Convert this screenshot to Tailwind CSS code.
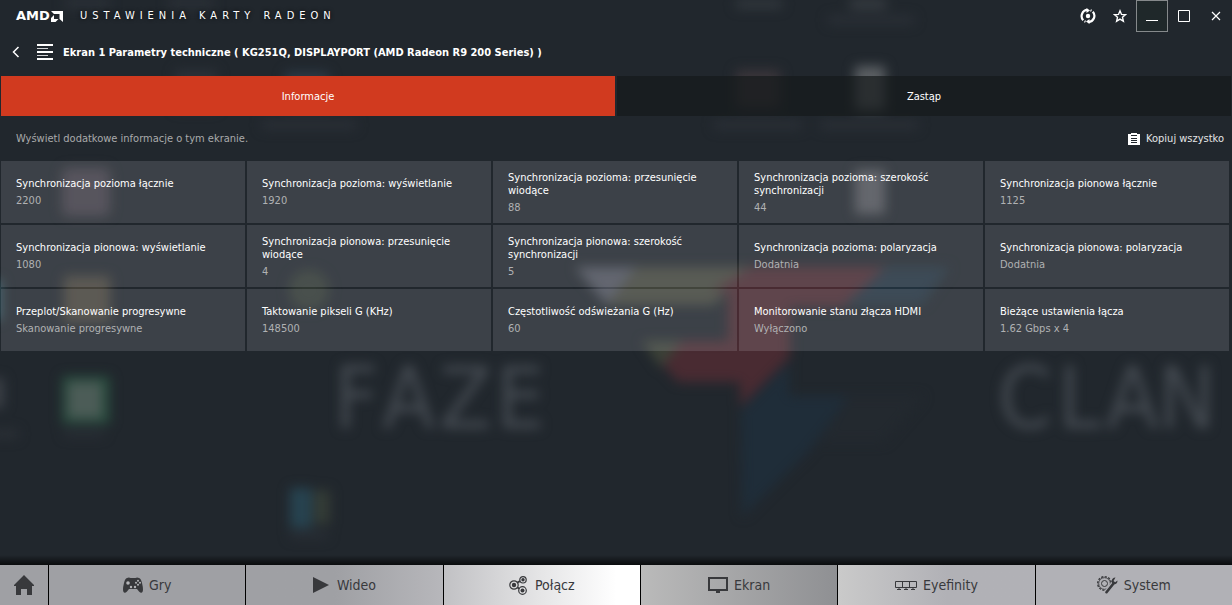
<!DOCTYPE html>
<html lang="pl" class="h-full">
  <head>
    <meta charset="UTF-8" />
    <meta name="viewport" content="width=device-width, initial-scale=1.0" />
    <title>Ustawienia karty Radeon</title>
    <script src="https://cdn.jsdelivr.net/npm/@tailwindcss/browser@4"></script>
  </head>
  <body class="relative isolate flex flex-col min-h-screen overflow-x-hidden bg-[#21272d] text-white text-[11px] leading-[13px] font-['DejaVu_Sans_Condensed','DejaVu_Sans',sans-serif]">
    <!-- Blurred desktop behind the window -->
    <svg class="absolute inset-0 -z-10 w-full h-full" viewBox="0 0 1232 605" preserveAspectRatio="xMidYMid slice" aria-hidden="true">
      <defs>
        <filter id="soft" x="-50%" y="-50%" width="200%" height="200%" color-interpolation-filters="sRGB"><feGaussianBlur stdDeviation="6" /></filter>
      </defs>
      <g filter="url(#soft)">
        <path d="M575 267h62l-30 38z" fill="#4d515b" />
        <path d="M637 267h113l-36 38H607z" fill="#42453c" />
        <path d="M752 267h134l-40 40h-56v50l-50 50v-25h-62l-36-41h86v-50h-16z" fill="#492b32" />
        <path d="M642 341h40l-21 27z" fill="#3c4238" />
        <path d="M886 267h64l-28 38h-78z" fill="#22323e" />
        <path d="M741 410l48-48v34h60l-40 55-67 66z" fill="#1f2d39" />
        <path d="M849 396h75l-40 46h-66z" fill="#23292f" />
        <rect x="62" y="168" width="48" height="48" rx="6" fill="#403d46" />
        <rect x="64" y="276" width="46" height="46" fill="#46433b" />
        <circle cx="309" cy="290" r="20" fill="#303833" />
        <rect x="62" y="376" width="48" height="48" fill="#264a3c" />
        <rect x="68" y="382" width="34" height="36" fill="#4c5c57" />
        <rect x="290" y="488" width="22" height="40" fill="#274350" />
        <rect x="314" y="490" width="16" height="34" fill="#343c36" />
        <rect x="736" y="70" width="44" height="38" fill="#3a353a" />
        <rect x="855" y="66" width="30" height="44" fill="#5b5f63" />
        <rect x="855" y="170" width="30" height="44" fill="#4f5258" />
        <rect x="714" y="121" width="88" height="8" fill="#2b3037" />
        <rect x="820" y="121" width="98" height="8" fill="#2b3037" />
        <rect x="175" y="70" width="42" height="40" fill="#2b3138" />
        <rect x="285" y="72" width="44" height="36" fill="#2c3a46" />
        <rect x="262" y="121" width="94" height="8" fill="#2b3037" />
        <rect x="736" y="0" width="46" height="8" fill="#343a40" />
        <rect x="850" y="0" width="36" height="8" fill="#3c4146" />
        <rect x="828" y="16" width="86" height="8" fill="#2b3037" />
        <rect x="64" y="0" width="46" height="6" fill="#30363d" />
        <rect x="168" y="0" width="46" height="6" fill="#30363d" />
        <rect x="-12" y="280" width="14" height="40" fill="#31505a" />
        <rect x="-12" y="378" width="16" height="30" fill="#3a3f46" />
        <rect x="-8" y="430" width="26" height="8" fill="#2c3137" />
        <rect x="64" y="430" width="40" height="6" fill="#2b3037" />
        <rect x="290" y="532" width="38" height="6" fill="#2b3037" />
      </g>
      <g filter="url(#soft)" fill="#444a51" font-family="'DejaVu Sans Condensed','DejaVu Sans',sans-serif" font-size="86">
        <text y="428" x="334 382 439 496">FAZE</text>
        <text y="428" x="998 1058 1106 1158">CLAN</text>
      </g>
    </svg>

    <header>
      <div class="flex items-start justify-between h-8">
        <div class="flex items-center h-8 pl-4">
          <div class="flex items-center w-16">
            <span class="font-['DejaVu_Sans',sans-serif] font-bold text-[13px] leading-4">AMD</span>
            <svg class="w-[13px] h-[11px]" viewBox="0 0 13 11" fill="currentColor" aria-hidden="true">
              <path d="M1 0h12v11l-3.500-3V3H4z" />
              <path d="M4 4v4h4.500l-3 3H1V7z" />
            </svg>
          </div>
          <span class="leading-4 tracking-[5px] [text-shadow:0_0_4px_#000] whitespace-nowrap">USTAWIENIA KARTY RADEON</span>
        </div>
        <div class="flex">
          <button class="grid place-items-center size-8" aria-label="Aktualizacje">
            <svg class="size-4" viewBox="0 0 16 16" fill="none" stroke="currentColor" stroke-width="2.200" aria-hidden="true">
              <path d="M3.200 12.200A6.200 6.200 0 0 1 7.500 1.900" />
              <path d="M12.800 3.800A6.200 6.200 0 0 1 8.500 14.100" />
              <path d="M10.500 2.300l1 .5M4.500 13.200l1 .5" />
              <path d="M6.500 0v5L10 2.400zM9.500 16v-5L6 13.600z" fill="currentColor" stroke="none" />
              <circle cx="8" cy="8" r="2.200" fill="currentColor" stroke="none" />
            </svg>
          </button>
          <button class="grid place-items-center size-8" aria-label="Ulubione">
            <svg class="size-3.5" viewBox="0 0 14 14" fill="none" stroke="currentColor" stroke-width="1.400" aria-hidden="true">
              <path d="M7 1.800l1.500 3.600 4 .3-3 2.600.9 3.900L7 10.100l-3.400 2.100.9-3.900-3-2.600 4-.3z" />
            </svg>
          </button>
          <button class="grid place-items-center size-8 border border-[#85898b] bg-[#1f282a]" aria-label="Minimalizuj">
            <svg class="size-3" viewBox="0 0 12 12" fill="currentColor" aria-hidden="true"><path d="M0 10h12v1H0z" /></svg>
          </button>
          <button class="grid place-items-center size-8" aria-label="Maksymalizuj">
            <svg class="size-3" viewBox="0 0 12 12" fill="none" stroke="currentColor" aria-hidden="true"><path d="M.5.5h11v11H.5z" /></svg>
          </button>
          <button class="grid place-items-center size-8" aria-label="Zamknij">
            <svg class="size-2.5" viewBox="0 0 10 10" fill="none" stroke="currentColor" stroke-width="1.200" aria-hidden="true"><path d="M1 1l8 8M9 1L1 9" /></svg>
          </button>
        </div>
      </div>

      <div class="flex items-center h-11 pb-1 pl-3">
        <button class="w-[25px]" aria-label="Wstecz">
          <svg class="w-2 h-3" viewBox="0 0 8 12" fill="none" stroke="currentColor" stroke-width="1.500" aria-hidden="true"><path d="M6.500 1L1.500 6l5 5" /></svg>
        </button>
        <svg class="w-4 h-4" viewBox="0 0 16 16" fill="currentColor" aria-hidden="true">
          <path d="M0 0h16v2H0zM0 7h16v2H0zM0 14h16v2H0z" />
          <path d="M0 4h11v1H0zM0 11h11v1H0z" opacity=".8" />
        </svg>
        <h1 class="pl-2.5 font-bold">Ekran 1 Parametry techniczne ( KG251Q, DISPLAYPORT (AMD Radeon R9 200 Series) )</h1>
      </div>
    </header>

    <div class="grid grid-cols-2 gap-0.5 px-px" role="tablist">
      <button class="h-10 bg-[#d13a1f]" role="tab" aria-selected="true">Informacje</button>
      <button class="h-10 bg-[#161a1b]/70" role="tab" aria-selected="false">Zastąp</button>
    </div>

    <main class="flex-1">
      <div class="flex items-center justify-between h-[45px] pl-4 pr-2">
        <p class="text-[#a9aaab]">Wyświetl dodatkowe informacje o tym ekranie.</p>
        <button class="flex items-center gap-1.5 text-[#e4e5e6]">
          <svg class="w-3 h-3" viewBox="0 0 12 12" aria-hidden="true">
            <path d="M0 1h3V0h6v1h3v11H0z" fill="#fff" />
            <path d="M3 2h6v1H3zM3 5h6v1H3zM3 7h6v1H3zM3 9h6v1H3z" fill="#21272d" />
          </svg>
          Kopiuj wszystko
        </button>
      </div>

      <dl id="specs" class="grid grid-cols-5 gap-0.5 pl-px pr-[3px]"></dl>
    </main>

    <div class="h-2.5 bg-linear-to-b from-transparent to-black/70"></div>
    <nav class="flex h-10 text-sm text-[#38393c]">
      <a href="#" class="grid place-items-center w-12 bg-[#9fa0a4]" aria-label="Strona główna">
        <svg class="w-5 h-5" viewBox="0 0 20 20" fill="currentColor" aria-hidden="true"><path d="M10 0l10 10v1h-2v9h-5v-6H7v6H2v-9H0v-1z" /></svg>
      </a>
      <a href="#" class="flex flex-1 items-center justify-center gap-1.5 border-l border-black bg-[#9fa0a4]">
        <svg class="w-5 h-4" viewBox="0 0 20 16" aria-hidden="true">
          <path d="M4 1Q6 0 7.500 1h5Q14 0 16 1q2 .5 3 5 1.500 6 .7 8.500Q18.500 17 16 14.500L14 12H6l-2 2.500Q1.500 17 .3 14.500-.5 12 1 6 2 1.500 4 1z" fill="currentColor" />
          <circle cx="5" cy="6" r="1.800" fill="#b4b5b8" />
          <g fill="#b4b5b8"><circle cx="15" cy="3.800" r="1" /><circle cx="15" cy="7.800" r="1" /><circle cx="13" cy="5.800" r="1" /><circle cx="17" cy="5.800" r="1" /><circle cx="8" cy="10" r="1.200" /><circle cx="12" cy="10" r="1.200" /></g>
        </svg>
        Gry
      </a>
      <a href="#" class="flex flex-1 items-center justify-center gap-2 border-l border-black bg-linear-to-r from-[#9fa0a4] from-45% to-[#b7b7bb]">
        <svg class="w-4 h-4" viewBox="0 0 16 16" fill="currentColor" aria-hidden="true"><path d="M0 0l16 8-16 8z" /></svg>
        Wideo
      </a>
      <a href="#" class="flex flex-1 items-center justify-center gap-2 border-l border-black bg-linear-to-r from-[#c1c1c4] via-[#e6e6e7] to-white to-88%">
        <svg class="w-[18px] h-[19px]" viewBox="0 0 18 19" fill="none" stroke="currentColor" stroke-width="1.200" aria-hidden="true">
          <circle cx="5" cy="9" r="4.200" /><circle cx="14" cy="3.800" r="3.200" /><circle cx="13.500" cy="14.500" r="3.800" />
          <path d="M8.500 6.500l2.500-1.400M8.500 11.500l2 1.300" stroke-width="1.800" />
          <g fill="currentColor" stroke="none"><circle cx="5" cy="9" r="2.200" /><circle cx="14" cy="3.800" r="1.700" /><circle cx="13.500" cy="14.500" r="2" /></g>
        </svg>
        Połącz
      </a>
      <a href="#" class="flex flex-1 items-center justify-center gap-1.5 border-l border-black bg-linear-to-r from-[#bababa] to-[#8f9093]">
        <svg class="w-5 h-4" viewBox="0 0 20 16" aria-hidden="true">
          <path d="M1 1h18v12H1z" fill="none" stroke="currentColor" stroke-width="2" />
          <path d="M8 13h4v3H8z" fill="currentColor" />
        </svg>
        Ekran
      </a>
      <a href="#" class="flex flex-1 items-center justify-center gap-1.5 border-l border-black bg-linear-to-r from-[#cacaca] to-[#b1b1b6] to-55%">
        <svg class="w-[22px] h-[9px]" viewBox="0 0 22 9" fill="none" stroke="currentColor" aria-hidden="true">
          <path d="M.5.5h21v6H.5zM7.500.5v6M14.500.5v6" />
          <path d="M2 8.500h4M9 8.500h4M16 8.500h4M4 6v2M11 6v2M18 6v2" />
        </svg>
        Eyefinity
      </a>
      <a href="#" class="flex flex-1 items-center justify-center gap-1.5 border-l border-black bg-[#b1b1b6]">
        <svg class="w-[21px] h-[18px]" viewBox="0 0 21 18" fill="none" stroke="currentColor" aria-hidden="true">
          <circle cx="7.500" cy="7.500" r="6.800" stroke-width="1.400" stroke-dasharray="2.200 1.360" />
          <circle cx="7.500" cy="7.500" r="5.800" stroke-width=".8" />
          <circle cx="7.500" cy="7.500" r="3" />
          <path d="M9.500 16.500l7-9" stroke="#b1b1b6" stroke-width="5" />
          <path d="M9.500 16.200l7.200-9" stroke-width="2.600" stroke-linecap="round" />
          <path d="M18.500 1.500q-3.500 0-3.800 3.500 0 3.500 3.300 3.200 2.500-.5 2.500-3.700l-2.300 1.700-1.700-1.200z" fill="currentColor" stroke="none" />
        </svg>
        System
      </a>
    </nav>

    <script>
      const specs = [
        ["Synchronizacja pozioma łącznie", "2200"],
        ["Synchronizacja pozioma: wyświetlanie", "1920"],
        ["Synchronizacja pozioma: przesunięcie wiodące", "88"],
        ["Synchronizacja pozioma: szerokość synchronizacji", "44"],
        ["Synchronizacja pionowa łącznie", "1125"],
        ["Synchronizacja pionowa: wyświetlanie", "1080"],
        ["Synchronizacja pionowa: przesunięcie wiodące", "4"],
        ["Synchronizacja pionowa: szerokość synchronizacji", "5"],
        ["Synchronizacja pozioma: polaryzacja", "Dodatnia"],
        ["Synchronizacja pionowa: polaryzacja", "Dodatnia"],
        ["Przeplot/Skanowanie progresywne", "Skanowanie progresywne"],
        ["Taktowanie pikseli G (KHz)", "148500"],
        ["Częstotliwość odświeżania G (Hz)", "60"],
        ["Monitorowanie stanu złącza HDMI", "Wyłączono"],
        ["Bieżące ustawienia łącza", "1.62 Gbps x 4"]
      ];

      document.getElementById("specs").innerHTML = specs.map(([name, value]) => `
        <div class="flex flex-col justify-center gap-1 min-h-[62px] pl-[15px] pr-6 bg-[#fafaff]/13">
          <dt>${name}</dt>
          <dd class="text-[#b0b1b3]">${value}</dd>
        </div>
      `).join("");
    </script>
  </body>
</html>
